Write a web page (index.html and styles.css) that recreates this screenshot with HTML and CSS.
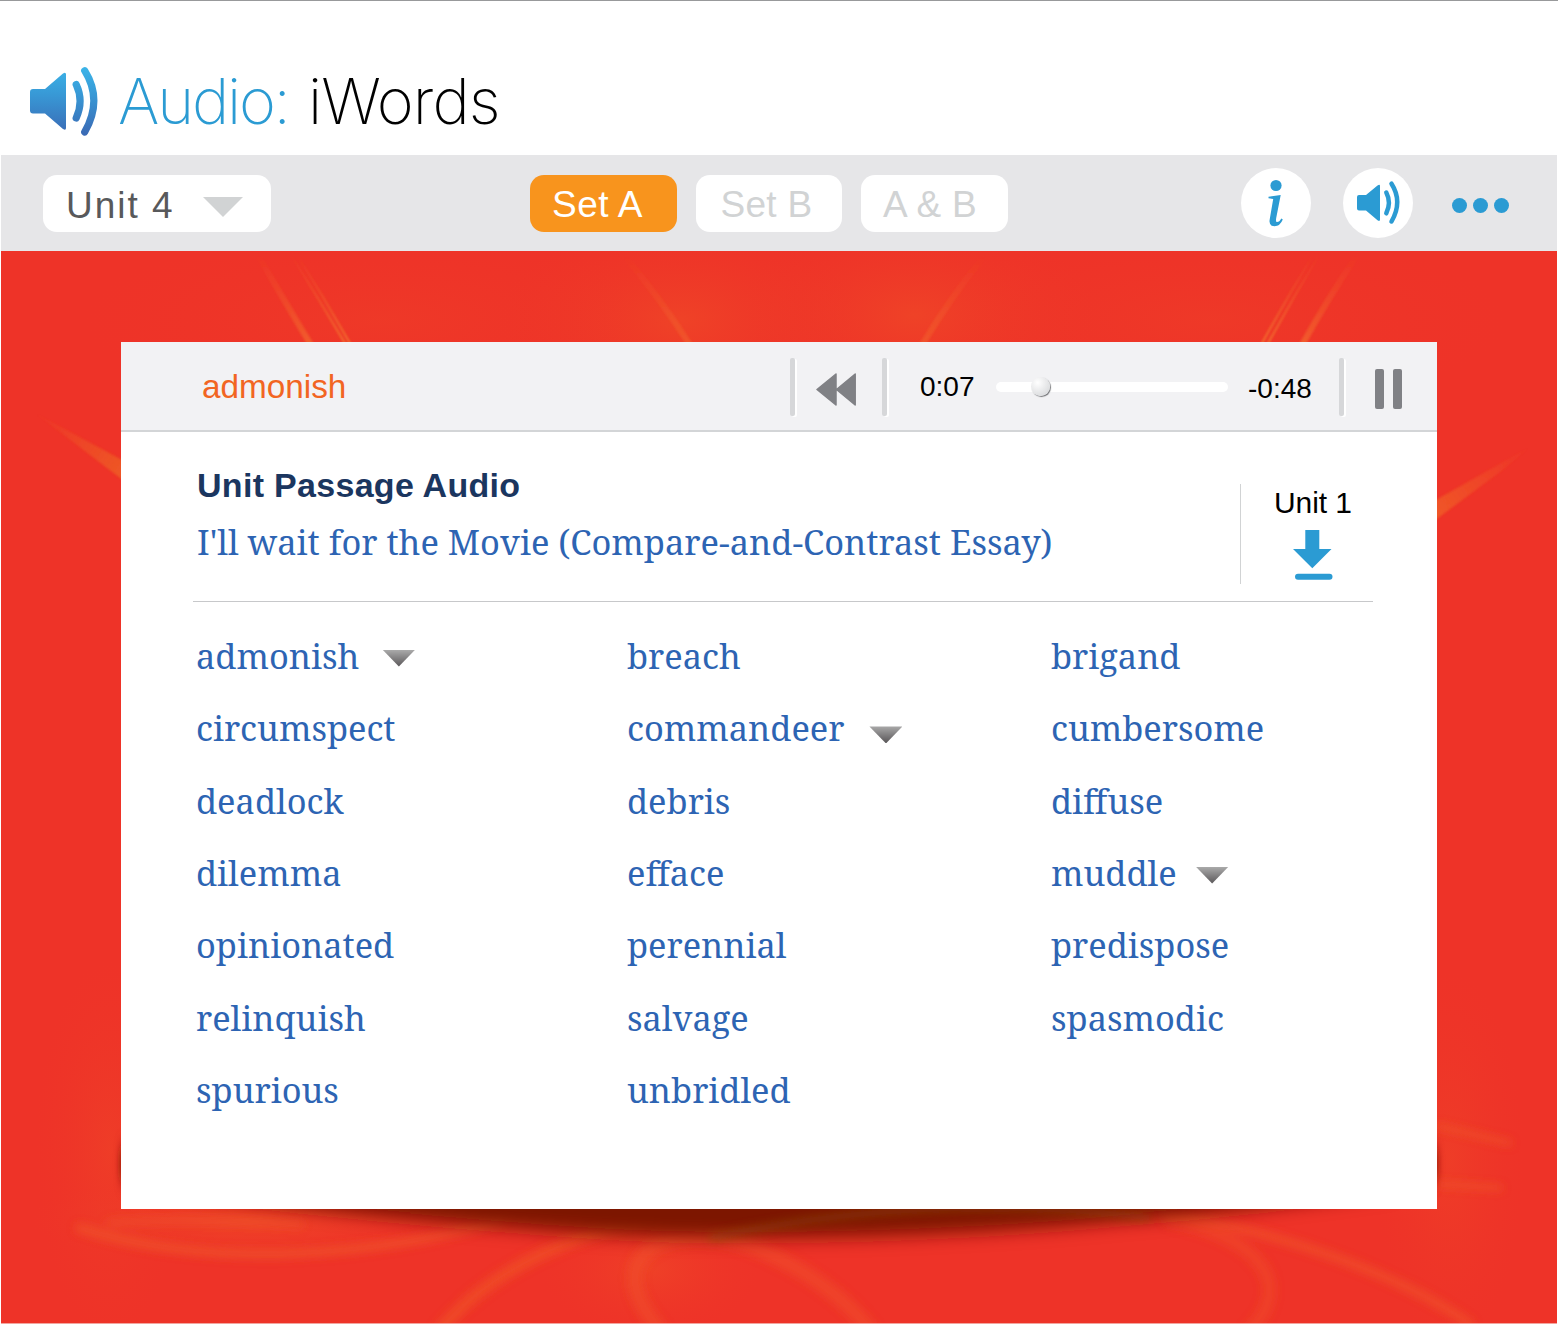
FILE: index.html
```html
<!DOCTYPE html>
<html lang="en">
<head>
<meta charset="utf-8">
<title>Audio: iWords</title>
<link rel="stylesheet" href="styles.css">
</head>
<body>
<div class="app">
  <header class="title-bar">
    <svg class="title-icon" width="70" height="72" viewBox="0 0 70 72">
      <defs>
        <linearGradient id="speaker" gradientUnits="userSpaceOnUse" x1="0" y1="2" x2="0" y2="70">
          <stop offset="0" stop-color="#3bb4e8"/><stop offset=".4" stop-color="#3899d6"/><stop offset="1" stop-color="#3a69b4"/>
        </linearGradient>
      </defs>
      <path fill="url(#speaker)" d="M3 24H15L33 8.500Q36 6.500 36 9.500V63Q36 66 33 64L15 48.500H3Q0 48.500 0 45.500V27Q0 24 3 24Z"/>
      <path fill="none" stroke="url(#speaker)" stroke-width="7.200" stroke-linecap="round" d="M46.200 19.500Q54 36 46.200 53M54.700 5.700Q73 35 54.700 67"/>
    </svg>
    <h1 class="title"><span class="title-kind">Audio:</span><span class="title-name">iWords</span></h1>
  </header>

  <nav class="toolbar">
    <button class="unit-select">Unit 4
      <svg width="40" height="20" viewBox="0 0 40 20"><path fill="#d1d3d4" d="M0 0H40L20 20Z"/></svg>
    </button>
    <div class="sets">
      <button class="set set-a active">Set A</button>
      <button class="set set-b">Set B</button>
      <button class="set set-ab">A &amp; B</button>
    </div>
    <div class="tools">
      <button class="round">
        <svg width="70" height="70" viewBox="0 0 70 70" fill="#2b9bd3">
          <circle cx="35" cy="17.500" r="5.600"/>
          <path d="M27.500 28.800L39.700 27L35.200 50Q34.500 54 36 54Q38.500 54 40.300 50.500L41.800 51.500Q39 58.300 33.500 58.300Q27.500 58.300 28.700 51.500L32.200 31L27.500 30.200Z"/>
        </svg>
      </button>
      <button class="round">
        <svg width="70" height="70" viewBox="0 0 70 70">
          <path fill="#2b9bd3" d="M16 27H23L34.500 17.500Q37 16 37 18V51.500Q37 54 34.500 52.300L23 42.500H16Q14 42.500 14 40.500V29Q14 27 16 27Z"/>
          <path fill="none" stroke="#2b9bd3" stroke-width="4.500" stroke-linecap="round" d="M43.300 24.500Q48.500 34.500 43.300 45.300M48.500 15.700Q60 33.500 48.500 53.500"/>
        </svg>
      </button>
      <button class="more"><i></i><i></i><i></i></button>
    </div>
  </nav>

  <main class="stage">
    <svg class="backdrop" width="1556" height="1072" viewBox="1 251 1556 1072">
      <defs>
        <radialGradient id="glow"><stop offset="0" stop-color="#f05326" stop-opacity=".6"/><stop offset="1" stop-color="#ee3a27" stop-opacity="0"/></radialGradient>
        <filter id="soft1" x="-20%" y="-20%" width="140%" height="140%"><feGaussianBlur stdDeviation="1"/></filter>
        <filter id="soft4" x="-20%" y="-60%" width="140%" height="220%"><feGaussianBlur stdDeviation="4"/></filter>
        <filter id="side" x="-400%" y="-60%" width="900%" height="220%"><feGaussianBlur stdDeviation="3 8"/></filter>
        <filter id="soft9" x="-20%" y="-60%" width="140%" height="220%"><feGaussianBlur stdDeviation="9"/></filter>
        <linearGradient id="fall" gradientUnits="userSpaceOnUse" x1="0" y1="255" x2="0" y2="342"><stop offset="0" stop-color="#f26a2a" stop-opacity="0"/><stop offset="1" stop-color="#f3722e"/></linearGradient>
        <linearGradient id="left" gradientUnits="userSpaceOnUse" x1="35" y1="410" x2="121" y2="470"><stop offset="0" stop-color="#ee5a25" stop-opacity="0"/><stop offset="1" stop-color="#ee5a25"/></linearGradient>
        <linearGradient id="right" gradientUnits="userSpaceOnUse" x1="1530" y1="445" x2="1437" y2="515"><stop offset="0" stop-color="#f05a27" stop-opacity="0"/><stop offset="1" stop-color="#f05a27"/></linearGradient>
      </defs>
      <rect x="1" y="251" width="1556" height="1072" fill="#ee3328"/>
      <ellipse cx="680" cy="320" rx="180" ry="100" fill="url(#glow)" opacity=".8"/>
      <ellipse cx="915" cy="315" rx="180" ry="100" fill="url(#glow)" opacity=".8"/>
      <ellipse cx="380" cy="320" rx="300" ry="90" fill="url(#glow)" opacity=".3"/>
      <ellipse cx="1210" cy="320" rx="300" ry="90" fill="url(#glow)" opacity=".3"/>
      <ellipse cx="110" cy="1150" rx="75" ry="190" fill="url(#glow)" opacity=".5"/>
      <ellipse cx="1450" cy="1160" rx="75" ry="190" fill="url(#glow)" opacity=".5"/>
      <ellipse cx="250" cy="1220" rx="220" ry="45" fill="url(#glow)"/>
      <ellipse cx="650" cy="1270" rx="110" ry="65" fill="url(#glow)" opacity=".7"/>
      <g fill="none" stroke="url(#fall)" filter="url(#soft1)">
        <path stroke-width="6" opacity=".6" d="M258 255Q285 302 311 345M1357 255Q1327 300 1302 345"/>
        <path stroke-width="1.800" d="M288 250Q317 296 346 345M294 250Q323 296 351 345M1316 250Q1288 296 1261 345M1322 250Q1294 296 1267 345"/>
        <path stroke-width="6" opacity=".4" d="M624 255Q660 298 690 345M985 255Q950 298 922 345"/>
      </g>
      <path fill="url(#left)" filter="url(#soft1)" opacity=".9" d="M35 413L124 461V481L60 432Z"/>
      <path fill="url(#right)" filter="url(#soft1)" opacity=".9" d="M1530 447L1434 501V521L1500 472Z"/>
      <g fill="none" stroke="#ef5427" stroke-linecap="round" filter="url(#soft4)">
        <path stroke-width="9" opacity=".7" d="M80 1228C210 1270 380 1256 500 1220"/>
        <path stroke-width="8" opacity=".5" d="M110 1223Q180 1217 300 1224"/>
        <path stroke-width="12" opacity=".65" d="M440 1330C490 1270 570 1235 660 1215"/>
        <path stroke-width="15" opacity=".5" d="M660 1330C590 1250 680 1215 760 1250Q830 1280 870 1330"/>
        <path stroke-width="8" opacity=".7" d="M1160 1211C1290 1235 1400 1275 1470 1324"/>
        <path stroke-width="13" opacity=".4" d="M1170 1220C1270 1240 1290 1290 1250 1330"/>
        <path stroke-width="5" opacity=".8" d="M1438 1126L1509 1143M1438 1184L1500 1188"/>
      </g>
      <path fill="#7d1402" filter="url(#soft9)" d="M150 1190H1400Q1260 1210 1120 1221C980 1235 750 1243 600 1234C450 1224 320 1212 150 1190Z"/>
      <path fill="none" stroke="#8b4608" stroke-width="8" opacity=".5" filter="url(#soft4)" d="M710 1238Q930 1190 1150 1218"/>
      <ellipse cx="123" cy="1164" rx="3" ry="20" fill="#861406" filter="url(#side)"/>
      <ellipse cx="1435" cy="1164" rx="3" ry="18" fill="#861406" filter="url(#side)"/>
    </svg>

    <section class="panel">
      <div class="player">
        <div class="now">admonish</div>
        <div class="rule"></div>
        <button class="rewind"><svg width="40" height="33" viewBox="0 0 40 33" fill="#808185" stroke="#808185" stroke-width="1.500" stroke-linejoin="round"><path d="M1 16.500L20 1V32ZM20.500 16.500L39.200 1V32Z"/></svg></button>
        <div class="rule"></div>
        <span class="time elapsed">0:07</span>
        <div class="track"><div class="knob"></div></div>
        <span class="time remaining">-0:48</span>
        <div class="rule"></div>
        <button class="pause"><i></i><i></i></button>
      </div>
      <div class="body">
        <div class="passage">
          <div class="passage-text">
            <h2>Unit Passage Audio</h2>
            <a class="link passage-link">I'll wait for the Movie (Compare-and-Contrast Essay)</a>
          </div>
          <div class="download">
            <span>Unit 1</span>
            <svg width="40" height="50" viewBox="0 0 40 50" fill="#2b9bd3"><path d="M12.300 0H26.300V19H38.500L19.300 38.300L0 19H12.300Z"/><rect x="2" y="43.700" width="37.500" height="6" rx="3"/></svg>
          </div>
        </div>
        <div class="words">
          <a class="link">admonish<b class="arrow first"></b></a><a class="link">breach</a><a class="link">brigand</a>
          <a class="link">circumspect</a><a class="link">commandeer<b class="arrow second"></b></a><a class="link">cumbersome</a>
          <a class="link">deadlock</a><a class="link">debris</a><a class="link">diffuse</a>
          <a class="link">dilemma</a><a class="link">efface</a><a class="link">muddle<b class="arrow third"></b></a>
          <a class="link">opinionated</a><a class="link">perennial</a><a class="link">predispose</a>
          <a class="link">relinquish</a><a class="link">salvage</a><a class="link">spasmodic</a>
          <a class="link">spurious</a><a class="link">unbridled</a>
        </div>
      </div>
    </section>
  </main>
</div>
</body>
</html>
```
FILE: styles.css
```css
* { box-sizing: border-box; }
body { margin: 0; background: #fff; font-family: "Liberation Sans", Arial, sans-serif; }
button { border: 0; padding: 0; margin: 0; background: none; font: inherit; }
svg { display: block; }
.app { width: 1558px; height: 1324px; overflow: hidden; border-top: 1px solid #98999b; display: flex; flex-direction: column; }

.title-bar { height: 154px; display: flex; align-items: flex-start; padding: 64px 0 0 30px; }
.title { margin: 0 0 0 18px; font: 160 63px/72px Inter, sans-serif; display: flex; white-space: nowrap; }
.title-kind { width: 190px; color: #2b9bd3; letter-spacing: -2.200px; }
.title-name { color: #000; letter-spacing: -.900px; }

.toolbar { height: 96px; margin: 0 1px; background: #e6e6e8; display: flex; align-items: flex-start; }
.unit-select { width: 228px; height: 57px; margin: 20px 0 0 42px; padding: 4px 28px 0 23px; border-radius: 14px; background: #fff; color: #58595b; font-size: 37px; letter-spacing: 2px; display: flex; align-items: center; justify-content: space-between; white-space: nowrap; }
.unit-select svg { margin-top: 2px; }
.sets { display: flex; gap: 19px; margin: 20px 0 0 259px; }
.set { width: 146.500px; height: 57px; border-radius: 14px; background: #fff; color: #d1d3d4; font-size: 37px; line-height: 59px; letter-spacing: .300px; text-align: left; white-space: nowrap; }
.set-a { padding-left: 22px; letter-spacing: .500px; }
.set-b { padding-left: 25px; }
.set-ab { padding-left: 22px; }
.set.active { background: #f8941d; color: #fff; }
.tools { display: flex; align-items: center; margin: 13px 0 0 233px; }
.round { width: 70px; height: 70px; border-radius: 50%; background: #fff; margin-right: 32.500px; }
.more { display: flex; gap: 6px; margin: 5px 0 0 6px; }
.more i { width: 15px; height: 15px; border-radius: 50%; background: #2b9bd3; }

.stage { position: relative; height: 1073px; margin: 0 1px; padding: 91px 120px 0; border-bottom: 1px solid #f2a59f; }
.backdrop { position: absolute; left: 0; top: 0; }
.panel { position: relative; width: 1316px; height: 867px; background: #fff; }
.player { height: 90px; background: #f2f2f4; border-bottom: 2px solid #d3d5d7; display: flex; align-items: center; }
.now { width: 669px; padding: 1px 0 0 81px; color: #f26522; font-size: 33.300px; }
.rule { width: 5px; height: 58px; margin-top: 1px; border-radius: 2px; background: #d6d7d9; box-shadow: 2px 1px 0 #fff; }
.rewind { margin: 6px 26px 0 21px; }
.time { font-size: 28px; color: #000; }
.elapsed { margin-left: 33px; width: 76px; padding-top: 2px; }
.track { width: 232px; height: 10px; margin-top: 1px; border-radius: 5px; background: #fff; }
.knob { width: 19px; height: 19px; margin: -5px 0 0 35px; border-radius: 50%; background: radial-gradient(circle at 35% 30%, #fff, #dcdddf 75%); box-shadow: 1px 1px 1px #77787b; }
.remaining { margin-left: 20px; width: 91px; padding-top: 5px; }
.pause { display: flex; gap: 9px; margin: 5px 0 0 31px; }
.pause i { width: 9px; height: 40px; border-radius: 2px; background: #808185; }

.body { padding: 0 64px 0 72px; }
.passage { height: 170px; border-bottom: 1px solid #c7c8ca; display: flex; justify-content: space-between; }
.passage-text { padding: 33px 0 0 4px; }
h2 { margin: 0; font-size: 34px; line-height: 40px; letter-spacing: .3px; color: #1b365f; }
.link { font-family: "Noto Serif", "Droid Serif", "DejaVu Serif Condensed", "DejaVu Serif", serif; font-size: 34.400px; color: #2d64b3; white-space: nowrap; }
.passage-link { display: block; margin-top: 14px; font-size: 34.450px; line-height: 46px; }
.download { width: 133px; height: 100px; margin-top: 52px; border-left: 1px solid #d1d3d4; padding: 2px 0 0 33px; font-size: 30px; line-height: 34px; letter-spacing: -.100px; white-space: nowrap; }
.download svg { margin: 10px 0 0 19px; }
.words { display: grid; grid-template-columns: 431px 424px 1fr; grid-auto-rows: 72.330px; padding: 17.400px 0 0 3px; }
.words .link { display: flex; align-items: center; }
.arrow { width: 33px; height: 17px; background: linear-gradient(#aaa, #595658); clip-path: polygon(0 0, 100% 0, 50% 100%); }
.first { margin: 5px 0 0 23px; }
.second { margin: 14px 0 0 25px; }
.third { margin: 5px 0 0 19px; }
```
